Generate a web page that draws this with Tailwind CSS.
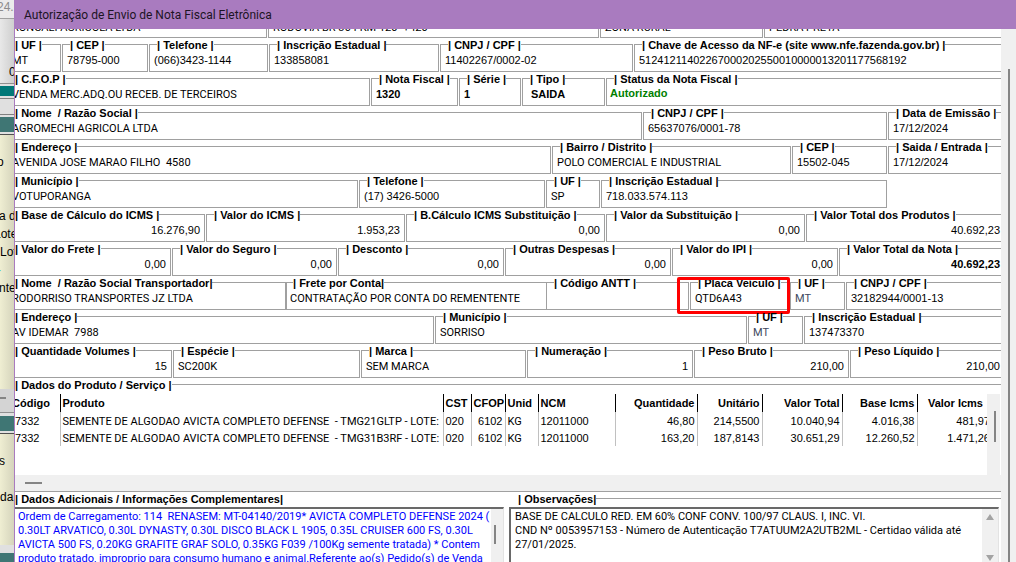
<!DOCTYPE html>
<html lang="pt-BR">
<head>
<meta charset="utf-8">
<title>Autorização de Envio de Nota Fiscal Eletrônica</title>
<script src="https://cdn.jsdelivr.net/npm/@tailwindcss/browser@4"></script>
</head>
<body class="flex h-screen overflow-hidden bg-[#a97bbf] font-['Liberation_Sans',Arial,sans-serif] text-[11px] text-black">

<!-- Window behind, only its edge is visible -->
<aside class="flex w-[14px] shrink-0 flex-col overflow-hidden whitespace-nowrap bg-[#e0e0e0] text-[12px]">
  <div class="h-[19px] shrink-0 border-b border-[#a0a0a0] bg-[#ebebeb] text-[12px] leading-[15px] text-[#8c8c8c]"><p class="-ml-[3px]">24.2</p></div>
  <div class="h-[65px] shrink-0 border-b border-[#909090] bg-linear-to-r from-[#e8e8e8] to-[#cfcfcf] pt-[44px] pl-[9px]">0</div>
  <div class="mt-[2px] h-[10px] shrink-0 bg-[#007878]"></div>
  <div class="mt-[2px] h-[17px] shrink-0 border-y border-[#808080]"></div>
  <div class="mt-[2px] h-[15px] shrink-0 bg-[#3f7674]"></div>
  <div class="mt-[2px] h-[255px] shrink-0 border-t border-[#505050] bg-linear-to-r from-[#efeed2] to-[#d5d4bc] leading-[18px]">
    <p class="-ml-[3px] pt-[18px]">o</p>
    <p class="-ml-px pt-[36px]">a d</p>
    <p class="-ml-[6px]">Lote</p>
    <p>Lote</p>
    <p class="-ml-[3px] text-[#40c8c8]">-</p>
    <p class="-ml-px">nte</p>
  </div>
  <div class="flex h-[24px] shrink-0 items-center border-b border-[#909090] bg-[#d4d4d4] pb-[6px]"><span class="h-[2px] w-[6px] bg-[#858585]"></span></div>
  <div class="mt-[3px] h-[15px] shrink-0 bg-[#3f7674]"></div>
  <div class="mt-[2px] h-[112px] shrink-0 border-t border-[#505050] bg-linear-to-r from-[#efeed2] to-[#d5d4bc] leading-[18px]">
    <p class="-ml-px pt-[18px]">s</p>
    <p class="pt-[18px]">da</p>
  </div>
  <div class="mt-[8px] h-[15px] shrink-0 bg-[#3f7674]"></div>
</aside>

<main class="flex min-w-0 flex-1 flex-col border-l border-[#a97bbf] bg-white">
  <header class="-ml-px flex h-[29px] shrink-0 items-center bg-[#a97bbf] pl-[10px]">
    <h1 class="font-['Roboto',sans-serif] text-[12px] leading-[16px] text-[#1c1424]">Autorização de Envio de Nota Fiscal Eletrônica</h1>
  </header>

  <div class="flex min-h-0 flex-1">
    <div class="min-w-0 flex-1 overflow-hidden">
      <form class="-mx-[8px] -mt-[25px] [&_fieldset]:relative [&_fieldset]:min-w-0 [&_fieldset]:border [&_fieldset]:border-[#a0a0a0] [&_fieldset]:px-[4px] [&_legend]:ml-[3px] [&_legend]:h-[13px] [&_legend]:text-[11px] [&_legend]:leading-[15px] [&_legend]:font-bold [&_legend]:whitespace-nowrap [&_p]:h-[20px] [&_p]:leading-[18px] [&_p]:whitespace-pre">

        <div class="grid grid-cols-[260fr_331fr_163fr_245fr] gap-px">
          <fieldset><legend>| Nome |</legend><p class="font-['Roboto',sans-serif] leading-[22px]!">RONCALI AGRICOLA LTDA</p></fieldset>
          <fieldset><legend>| Endereço |</legend><p class="font-['Roboto',sans-serif] leading-[22px]!">RODOVIA BR 364 KM 120  +420</p></fieldset>
          <fieldset><legend>| Bairro |</legend><p class="font-['Roboto',sans-serif] leading-[22px]!">ZONA RURAL</p></fieldset>
          <fieldset><legend>| Município |</legend><p class="font-['Roboto',sans-serif] leading-[22px]!">PEDRA PRETA</p></fieldset>
        </div>

        <div class="grid grid-cols-[54fr_86fr_119fr_170fr_193fr_375fr] gap-px">
          <fieldset><legend>| UF |</legend><p class="font-['Roboto',sans-serif] leading-[20px]!">MT</p></fieldset>
          <fieldset><legend>| CEP |</legend><p>78795-000</p></fieldset>
          <fieldset><legend>| Telefone |</legend><p>(066)3423-1144</p></fieldset>
          <fieldset><legend>| Inscrição Estadual |</legend><p>133858081</p></fieldset>
          <fieldset><legend>| CNPJ / CPF |</legend><p>11402267/0002-02</p></fieldset>
          <fieldset><legend>| Chave de Acesso da NF-e (site www.nfe.fazenda.gov.br) |</legend><p>51241211402267000202550010000013201177568192</p></fieldset>
        </div>

        <div class="grid grid-cols-[363fr_87fr_62fr_83fr_403fr] gap-px">
          <fieldset><legend>| C.F.O.P |</legend><p class="font-['Roboto',sans-serif] leading-[20px]!">VENDA MERC.ADQ.OU RECEB. DE TERCEIROS</p></fieldset>
          <fieldset><legend>| Nota Fiscal |</legend><p class="font-bold">1320</p></fieldset>
          <fieldset><legend>| Série |</legend><p class="font-bold">1</p></fieldset>
          <fieldset><legend>| Tipo |</legend><p class="pl-[4px] font-bold">SAIDA</p></fieldset>
          <fieldset class="px-[3px]!"><legend class="ml-[4px]!">| Status da Nota Fiscal |</legend><p class="leading-[16px]! font-bold text-[#008000]">Autorizado</p></fieldset>
        </div>

        <div class="grid grid-cols-[635fr_244fr_121fr] gap-px">
          <fieldset><legend class="whitespace-pre!">| Nome  / Razão Social |</legend><p class="font-['Roboto',sans-serif] leading-[20px]!">AGROMECHI AGRICOLA LTDA</p></fieldset>
          <fieldset><legend>| CNPJ / CPF |</legend><p>65637076/0001-78</p></fieldset>
          <fieldset><legend>| Data de Emissão |</legend><p>17/12/2024</p></fieldset>
        </div>

        <div class="grid grid-cols-[544fr_239fr_95fr_121fr] gap-px">
          <fieldset><legend>| Endereço |</legend><p class="font-['Roboto',sans-serif] leading-[20px]!">AVENIDA JOSE MARAO FILHO  4580</p></fieldset>
          <fieldset><legend>| Bairro / Distrito |</legend><p class="font-['Roboto',sans-serif] leading-[20px]!">POLO COMERCIAL E INDUSTRIAL</p></fieldset>
          <fieldset><legend>| CEP |</legend><p>15502-045</p></fieldset>
          <fieldset><legend>| Saida / Entrada |</legend><p>17/12/2024</p></fieldset>
        </div>

        <div class="grid grid-cols-[351fr_186fr_54fr_286fr_121fr] gap-px">
          <fieldset><legend>| Município |</legend><p class="font-['Roboto',sans-serif] leading-[20px]!">VOTUPORANGA</p></fieldset>
          <fieldset><legend>| Telefone |</legend><p>(17) 3426-5000</p></fieldset>
          <fieldset><legend>| UF |</legend><p class="font-['Roboto',sans-serif] leading-[20px]!">SP</p></fieldset>
          <fieldset><legend>| Inscrição Estadual |</legend><p>718.033.574.113</p></fieldset>
        </div>

        <div class="grid grid-cols-[198fr_199fr_199fr_199fr_203fr] gap-px [&_p]:text-right">
          <fieldset><legend>| Base de Cálculo do ICMS |</legend><p>16.276,90</p></fieldset>
          <fieldset><legend>| Valor do ICMS |</legend><p>1.953,23</p></fieldset>
          <fieldset><legend>| B.Cálculo ICMS Substituição |</legend><p>0,00</p></fieldset>
          <fieldset><legend>| Valor da Substituição |</legend><p>0,00</p></fieldset>
          <fieldset><legend>| Valor Total dos Produtos |</legend><p class="pr-[4px]">40.692,23</p></fieldset>
        </div>

        <div class="grid grid-cols-[164fr_165fr_166fr_166fr_166fr_170fr] gap-px [&_p]:text-right">
          <fieldset><legend>| Valor do Frete |</legend><p>0,00</p></fieldset>
          <fieldset><legend>| Valor do Seguro |</legend><p>0,00</p></fieldset>
          <fieldset><legend>| Desconto |</legend><p>0,00</p></fieldset>
          <fieldset><legend>| Outras Despesas |</legend><p>0,00</p></fieldset>
          <fieldset><legend>| Valor do IPI |</legend><p>0,00</p></fieldset>
          <fieldset><legend>| Valor Total da Nota |</legend><p class="pr-[4px] font-bold">40.692,23</p></fieldset>
        </div>

        <div class="grid grid-cols-[278fr_261fr_141fr_99fr_55fr_163fr] gap-px">
          <fieldset class="border-r-0!"><legend class="whitespace-pre!">| Nome  / Razão Social Transportador|</legend><p class="font-['Roboto',sans-serif] leading-[20px]!">RODORRISO TRANSPORTES JZ LTDA</p></fieldset>
          <fieldset class="-ml-px border-l-2! px-[3px]!"><legend>| Frete por Conta|</legend><p class="font-['Roboto',sans-serif] leading-[20px]!">CONTRATAÇÃO POR CONTA DO REMENTENTE</p></fieldset>
          <fieldset class="-ml-px border-l-0!"><legend>| Código ANTT |</legend><p></p></fieldset>
          <fieldset><legend>| Placa Veículo |</legend><p class="font-['Roboto',sans-serif] leading-[20px]!">QTD6A43</p>
            <!-- Highlight drawn over the plate field -->
            <div class="absolute -top-[12px] -right-[2px] -left-[14px] h-[37px] rounded-[2px] border-3 border-[#ff0000]"></div>
          </fieldset>
          <fieldset><legend>| UF |</legend><p class="font-['Roboto',sans-serif] leading-[20px]! text-[#404a60]">MT</p></fieldset>
          <fieldset><legend>| CNPJ / CPF |</legend><p>32182944/0001-13</p></fieldset>
        </div>

        <div class="grid grid-cols-[427fr_312fr_55fr_205fr] gap-px">
          <fieldset><legend>| Endereço |</legend><p class="font-['Roboto',sans-serif] leading-[20px]!">AV IDEMAR  7988</p></fieldset>
          <fieldset><legend>| Município |</legend><p class="font-['Roboto',sans-serif] leading-[20px]!">SORRISO</p></fieldset>
          <fieldset><legend>| UF |</legend><p class="font-['Roboto',sans-serif] leading-[20px]! text-[#404a60]">MT</p></fieldset>
          <fieldset><legend>| Inscrição Estadual |</legend><p>137473370</p></fieldset>
        </div>

        <div class="grid grid-cols-[165fr_187fr_165fr_166fr_155fr_159fr] gap-px">
          <fieldset><legend>| Quantidade Volumes |</legend><p class="text-right">15</p></fieldset>
          <fieldset><legend>| Espécie |</legend><p class="font-['Roboto',sans-serif] leading-[20px]!">SC200K</p></fieldset>
          <fieldset><legend>| Marca |</legend><p class="font-['Roboto',sans-serif] leading-[20px]!">SEM MARCA</p></fieldset>
          <fieldset><legend>| Numeração |</legend><p class="text-right">1</p></fieldset>
          <fieldset><legend>| Peso Bruto |</legend><p class="text-right">210,00</p></fieldset>
          <fieldset><legend>| Peso Líquido |</legend><p class="pr-[4px] text-right">210,00</p></fieldset>
        </div>

        <fieldset class="px-0!">
          <legend class="ml-[7px]!">| Dados do Produto / Serviço |</legend>
          <div class="flex h-[84px] pt-[3px] pr-[8px]">
            <div class="min-w-0 flex-1 overflow-hidden">
              <table class="w-[calc(100%+5px)] table-fixed border-collapse whitespace-nowrap [&_td]:overflow-hidden [&_td]:border-r [&_td]:border-[#c0c0c0] [&_td]:px-[2px] [&_td]:pt-[2px] [&_td]:leading-[15px] [&_td:last-child]:border-r-0 [&_th]:border-r [&_th]:border-black [&_th]:px-[2px] [&_th:last-child]:border-r-0">
                <colgroup>
                  <col class="w-[52px]"><col><col class="w-[28px]"><col class="w-[34px]"><col class="w-[33px]"><col class="w-[77px]"><col class="w-[82px]"><col class="w-[65px]"><col class="w-[80px]"><col class="w-[75px]"><col class="w-[75px]">
                </colgroup>
                <thead>
                  <tr class="h-[18px] text-left">
                    <th class="pl-[4px]!">Código</th><th>Produto</th><th>CST</th><th>CFOP</th><th>Unid</th><th>NCM</th>
                    <th class="text-right">Quantidade</th><th class="text-right">Unitário</th><th class="text-right">Valor Total</th><th class="text-right">Base Icms</th><th class="pr-[9px]! text-right">Valor Icms</th>
                  </tr>
                </thead>
                <tbody>
                  <tr class="h-[17px]">
                    <td class="pl-[7px]!">7332</td><td class="font-['Roboto',sans-serif] whitespace-pre">SEMENTE DE ALGODAO AVICTA COMPLETO DEFENSE  - TMG21GLTP - LOTE:</td><td>020</td><td class="text-right">6102</td><td class="font-['Roboto',sans-serif]">KG</td><td>12011000</td>
                    <td class="text-right">46,80</td><td class="text-right">214,5500</td><td class="text-right">10.040,94</td><td class="text-right">4.016,38</td><td class="text-right">481,97</td>
                  </tr>
                  <tr class="h-[17px]">
                    <td class="pl-[7px]!">7332</td><td class="font-['Roboto',sans-serif] whitespace-pre">SEMENTE DE ALGODAO AVICTA COMPLETO DEFENSE  - TMG31B3RF - LOTE:</td><td>020</td><td class="text-right">6102</td><td class="font-['Roboto',sans-serif]">KG</td><td>12011000</td>
                    <td class="text-right">163,20</td><td class="text-right">187,8143</td><td class="text-right">30.651,29</td><td class="text-right">12.260,52</td><td class="text-right">1.471,26</td>
                  </tr>
                </tbody>
              </table>
            </div>
            <div class="flex w-[13px] shrink-0 justify-end bg-[#f0f0f0] pt-[17px] pr-[4px]"><span class="h-[31px] w-[2px] bg-[#858585]"></span></div>
          </div>
          <div class="h-[16px] bg-[#f0f0f0] pt-[7px] pl-[17px]"><div class="h-[2px] w-[17px] bg-[#858585]"></div></div>
        </fieldset>

        <div class="grid grid-cols-[502fr_500fr]">
          <section class="pl-[7px]">
            <label for="dados" class="ml-px block h-[15px] leading-[14px] font-bold">| Dados Adicionais / Informações Complementares|</label>
            <div class="mr-[5px] flex h-[80px] border-t-2 border-r border-[#696969] border-r-[#e3e3e3]">
              <textarea id="dados" readonly class="min-w-0 flex-1 resize-none overflow-hidden pt-px pl-[4px] font-['Roboto',sans-serif] leading-[14px] whitespace-pre text-[#0000ff] outline-none">Ordem de Carregamento: 114  RENASEM: MT-04140/2019* AVICTA COMPLETO DEFENSE 2024 (
0.30LT ARVATICO, 0.30L DYNASTY, 0.30L DISCO BLACK L 1905, 0.35L CRUISER 600 FS, 0.30L
AVICTA 500 FS, 0.20KG GRAFITE GRAF SOLO, 0.35KG F039 /100Kg semente tratada) * Contem
produto tratado, improprio para consumo humano e animal.Referente ao(s) Pedido(s) de Venda</textarea>
              <div class="flex w-[12px] shrink-0 bg-[#f0f0f0] pt-[16px] pl-[3px]"><span class="h-[19px] w-[2px] bg-[#858585]"></span></div>
            </div>
          </section>
          <section class="pr-[10px]">
            <div class="-mr-[10px] flex h-[15px] items-start pl-[9px]">
              <label for="obs" class="leading-[14px] font-bold">| Observações|</label>
              <span class="mt-[6px] h-px flex-1 bg-[#a0a0a0]"></span>
            </div>
            <div class="flex h-[80px] border-t-2 border-r border-l-2 border-[#696969] border-r-[#e3e3e3]">
              <textarea id="obs" readonly class="min-w-0 flex-1 resize-none overflow-hidden pt-px pl-[4px] font-['Roboto',sans-serif] leading-[14px] whitespace-pre outline-none">BASE DE CALCULO RED. EM 60% CONF CONV. 100/97 CLAUS. I, INC. VI.
CND Nº 0053957153 - Número de Autenticação T7ATUUM2A2UTB2ML - Certidao válida até
27/01/2025.</textarea>
              <div class="flex w-[16px] shrink-0 flex-col items-center gap-[35px] bg-[#f0f0f0] pt-[5px]">
                <svg width="8" height="6" viewBox="0 0 8 6" fill="#a3a3a3"><path d="M4 0 8 6H0Z"/></svg>
                <svg width="8" height="6" viewBox="0 0 8 6" fill="#a3a3a3"><path d="M0 0H8L4 6Z"/></svg>
              </div>
            </div>
          </section>
        </div>
      </form>
    </div>
    <div class="flex w-[15px] shrink-0 justify-center bg-[#f0f0f0] pt-[40px]"><span class="h-full w-[2px] bg-[#858585]"></span></div>
  </div>
</main>
</body>
</html>
